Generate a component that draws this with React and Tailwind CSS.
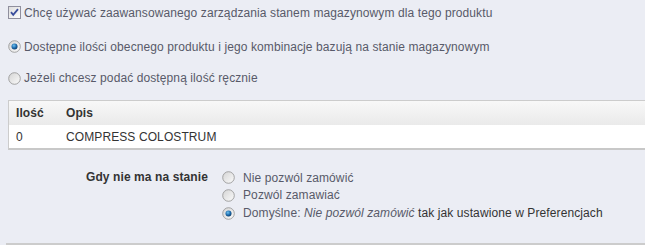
import React from "react";

function Checkbox() {
  return (
    <svg width="13" height="13" viewBox="0 0 13 13" className="shrink-0">
      <defs>
        <linearGradient id="cbg" x1="0" y1="0" x2="1" y2="1">
          <stop offset="0" stopColor="#dcdcdc" />
          <stop offset="1" stopColor="#ffffff" />
        </linearGradient>
      </defs>
      <rect x="0.5" y="0.5" width="12" height="12" fill="url(#cbg)" stroke="#8f8f9d" />
      <path d="M3 6.2 L5.2 8.8 L10 3.2" fill="none" stroke="#3a4e9c" strokeWidth="1.8" />
    </svg>
  );
}

function Radio({ checked }) {
  return (
    <svg width="13" height="13" viewBox="0 0 13 13" className="shrink-0">
      <defs>
        <linearGradient id="rbg" x1="0" y1="0" x2="1" y2="1">
          <stop offset="0" stopColor="#d4d4d4" />
          <stop offset="1" stopColor="#fbfbfb" />
        </linearGradient>
        <radialGradient id="rdot" cx="0.4" cy="0.35" r="0.7">
          <stop offset="0" stopColor="#6fc3f2" />
          <stop offset="0.6" stopColor="#1a67a8" />
          <stop offset="1" stopColor="#0d3a66" />
        </radialGradient>
      </defs>
      <circle cx="6.5" cy="6.5" r="5.8" fill="url(#rbg)" stroke="#9a9a9a" strokeWidth="0.9" />
      {checked && <circle cx="6.5" cy="6.5" r="3" fill="url(#rdot)" />}
    </svg>
  );
}

export default function App() {
  return (
    <div className="w-[645px] h-[245px] overflow-hidden bg-[#ebedf4] font-['Liberation_Sans',Arial,sans-serif] text-[12px] tracking-[0.1px] text-[#585a69] flex flex-col">
      <div className="flex items-center gap-[3px] pl-[8px] h-[26px]">
        <Checkbox />
        <span>Chcę używać zaawansowanego zarządzania stanem magazynowym dla tego produktu</span>
      </div>
      <div className="flex items-center gap-[3px] pl-[8px] h-[32px] mt-[5px]">
        <Radio checked />
        <span>Dostępne ilości obecnego produktu i jego kombinacje bazują na stanie magazynowym</span>
      </div>
      <div className="flex items-center gap-[3px] pl-[8px] h-[32px] mb-[1px]">
        <Radio />
        <span>Jeżeli chcesz podać dostępną ilość ręcznie</span>
      </div>
      <div className="ml-[8px] mt-[5px] border-t border-l border-[#cccccc] border-b-2 border-b-[#c8c8c8]">
        <div className="flex items-center h-[24px] bg-gradient-to-b from-[#f8f8f8] to-[#eaeaea] text-[#333333] font-bold text-[12px]">
          <div className="w-[57px] pl-[7px]">Ilość</div>
          <div>Opis</div>
        </div>
        <div className="flex items-center h-[23px] bg-white text-[#333333]">
          <div className="w-[57px] pl-[7px]">0</div>
          <div>COMPRESS COLOSTRUM</div>
        </div>
      </div>
      <div className="flex mt-[19px]">
        <div className="w-[208px] text-right font-bold text-[#333333] leading-[17px]">Gdy nie ma na stanie</div>
        <div className="ml-[14px] flex flex-col">
          <div className="flex items-center gap-[8px] h-[17px]">
            <Radio />
            <span>Nie pozwól zamówić</span>
          </div>
          <div className="flex items-center gap-[8px] h-[18px]">
            <Radio />
            <span>Pozwól zamawiać</span>
          </div>
          <div className="flex items-center gap-[8px] h-[18px]">
            <Radio checked />
            <span>
              Domyślne: <i>Nie pozwól zamówić</i> <span className="text-[#333333]">tak jak ustawione w Preferencjach</span>
            </span>
          </div>
        </div>
      </div>
      <div className="ml-[6px] mt-[21px] h-[2px] bg-[#cccccc]"></div>
    </div>
  );
}
